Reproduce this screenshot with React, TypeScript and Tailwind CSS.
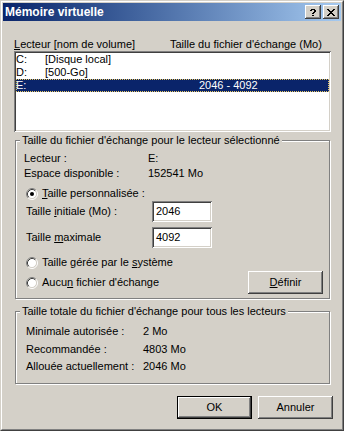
import React from "react";

const raised =
  "shadow-[inset_-1px_-1px_0_#404040,inset_1px_1px_0_#ffffff,inset_-2px_-2px_0_#808080,inset_2px_2px_0_#d4d0c8]";
const sunken =
  "shadow-[inset_1px_1px_0_#808080,inset_-1px_-1px_0_#ffffff,inset_2px_2px_0_#404040,inset_-2px_-2px_0_#d4d0c8]";
const etched = "border border-[#808080] shadow-[1px_1px_0_#ffffff,inset_1px_1px_0_#ffffff]";

function Radio({ checked }: { checked?: boolean }) {
  return (
    <svg width="12" height="12" viewBox="0 0 12 12" className="shrink-0">
      <circle cx="6" cy="6" r="4.5" fill="#ffffff" />
      <path d="M 2.11 9.89 A 5.5 5.5 0 0 1 9.89 2.11" stroke="#808080" fill="none" />
      <path d="M 9.89 2.11 A 5.5 5.5 0 0 1 2.11 9.89" stroke="#ffffff" fill="none" />
      <path d="M 2.82 9.18 A 4.5 4.5 0 0 1 9.18 2.82" stroke="#404040" fill="none" />
      <path d="M 9.18 2.82 A 4.5 4.5 0 0 1 2.82 9.18" stroke="#d4d0c8" fill="none" />
      {checked && <circle cx="6" cy="6" r="2" fill="#000000" />}
    </svg>
  );
}

function CloseGlyph() {
  const rows = ["11000011", "01100110", "00111100", "00011000", "00111100", "01100110", "11000011"];
  return (
    <svg width="8" height="7" viewBox="0 0 8 7" shapeRendering="crispEdges">
      {rows.map((r, y) =>
        r.split("").map((c, x) => (c === "1" ? <rect key={`${x}-${y}`} x={x} y={y} width="1" height="1" fill="#000" /> : null))
      )}
    </svg>
  );
}

function HelpGlyph() {
  const rows = ["011110", "110011", "000011", "000110", "001100", "000000", "001100"];
  return (
    <svg width="6" height="7" viewBox="0 0 6 7" shapeRendering="crispEdges">
      {rows.map((r, y) =>
        r.split("").map((c, x) => (c === "1" ? <rect key={`${x}-${y}`} x={x} y={y} width="1" height="1" fill="#000" /> : null))
      )}
    </svg>
  );
}

function TextBox({ value }: { value: string }) {
  return (
    <div className={`w-[60px] h-[21px] bg-white ${sunken} pl-[4px] flex items-center`}>{value}</div>
  );
}

export default function App() {
  return (
    <div className="w-[344px] h-[431px] bg-[#d4d0c8] font-['Liberation_Sans',Arial,sans-serif] text-[11px] leading-[13px] text-black border border-t-[#d4d0c8] border-l-[#d4d0c8] border-r-[#404040] border-b-[#404040]">
      <div className="h-full border border-t-white border-l-white border-r-[#808080] border-b-[#808080] p-px flex flex-col">
        {/* Title bar */}
        <div className="h-[18px] shrink-0 flex items-center bg-gradient-to-r from-[#0a246a] to-[#a6caf0] pl-[2px]">
          <span className="text-white font-bold text-[12px] leading-[14px]">Mémoire virtuelle</span>
          <div className="ml-auto mr-[2px] flex gap-[2px]">
            <div className={`w-[16px] h-[14px] bg-[#d4d0c8] ${raised} flex items-center justify-center`}>
              <HelpGlyph />
            </div>
            <div className={`w-[16px] h-[14px] bg-[#d4d0c8] ${raised} flex items-center justify-center`}>
              <CloseGlyph />
            </div>
          </div>
        </div>

        {/* Body */}
        <div className="flex flex-col">
          <div className="mt-[17px] pl-[11px] flex h-[13px]">
            <span className="w-[156px]">
              <span className="underline">L</span>ecteur [nom de volume]
            </span>
            <span>Taille du fichier d'échange (Mo)</span>
          </div>

          <div className={`ml-[11px] w-[317px] h-[81px] bg-white ${sunken} p-[2px]`}>
            <div className="flex h-[13px]">
              <span className="w-[29px]">C:</span>
              <span>[Disque local]</span>
            </div>
            <div className="flex h-[13px]">
              <span className="w-[29px]">D:</span>
              <span>[500-Go]</span>
            </div>
            <div className="flex h-[13px] bg-[#0a246a] text-white outline-1 outline-dotted outline-[#e8c860] -outline-offset-1">
              <span className="w-[183px]">E:</span>
              <span>2046 - 4092</span>
            </div>
          </div>

          {/* Group 1 */}
          <div className={`relative mt-[8px] ml-[12px] w-[315px] ${etched} pb-[4px]`}>
            <span className="absolute left-[4px] top-[-7px] px-[2px] bg-[#d4d0c8]">
              Taille du fichier d'échange pour le lecteur sélectionné
            </span>
            <div className="mt-[11px] pl-[8px] flex h-[13px]">
              <span className="w-[124px]">Lecteur :</span>
              <span>E:</span>
            </div>
            <div className="mt-[2px] pl-[8px] flex h-[13px]">
              <span className="w-[124px]">Espace disponible :</span>
              <span>152541 Mo</span>
            </div>
            <div className="mt-[7px] pl-[10px] flex items-center gap-[4px] h-[13px]">
              <Radio checked />
              <span>
                <span className="underline">T</span>aille personnalisée :
              </span>
            </div>
            <div className="mt-[1px] pl-[10px] flex items-center h-[21px]">
              <span className="w-[126px]">
                Taille <span className="underline">i</span>nitiale (Mo) :
              </span>
              <TextBox value="2046" />
            </div>
            <div className="mt-[5px] pl-[10px] flex items-center h-[21px]">
              <span className="w-[126px]">
                Taille <span className="underline">m</span>aximale
              </span>
              <TextBox value="4092" />
            </div>
            <div className="mt-[8px] pl-[10px] flex items-center gap-[4px] h-[13px]">
              <Radio />
              <span>
                Taille gérée par le <span className="underline">s</span>ystème
              </span>
            </div>
            <div className="mt-[2px] pl-[10px] pr-[6px] flex items-center gap-[4px] h-[23px]">
              <Radio />
              <span>
                Aucu<span className="underline">n</span> fichier d'échange
              </span>
              <div className={`ml-auto w-[75px] h-[23px] ${raised} flex items-center justify-center`}>
                <span>
                  <span className="underline">D</span>éfinir
                </span>
              </div>
            </div>
          </div>

          {/* Group 2 */}
          <div className={`relative mt-[12px] ml-[12px] w-[315px] ${etched} pb-[10px]`}>
            <span className="absolute left-[4px] top-[-7px] px-[2px] bg-[#d4d0c8]">
              Taille totale du fichier d'échange pour tous les lecteurs
            </span>
            <div className="mt-[13px] pl-[10px] flex h-[13px]">
              <span className="w-[117px]">Minimale autorisée :</span>
              <span>2 Mo</span>
            </div>
            <div className="mt-[5px] pl-[10px] flex h-[13px]">
              <span className="w-[117px]">Recommandée :</span>
              <span>4803 Mo</span>
            </div>
            <div className="mt-[4px] pl-[10px] flex h-[13px]">
              <span className="w-[117px]">Allouée actuellement :</span>
              <span>2046 Mo</span>
            </div>
          </div>

          {/* Buttons */}
          <div className="mt-[12px] pr-[8px] flex justify-end gap-[6px]">
            <div className="w-[75px] h-[23px] border border-black">
              <div className={`w-full h-full ${raised} flex items-center justify-center`}>OK</div>
            </div>
            <div className={`w-[75px] h-[23px] ${raised} flex items-center justify-center`}>Annuler</div>
          </div>
        </div>
      </div>
    </div>
  );
}
